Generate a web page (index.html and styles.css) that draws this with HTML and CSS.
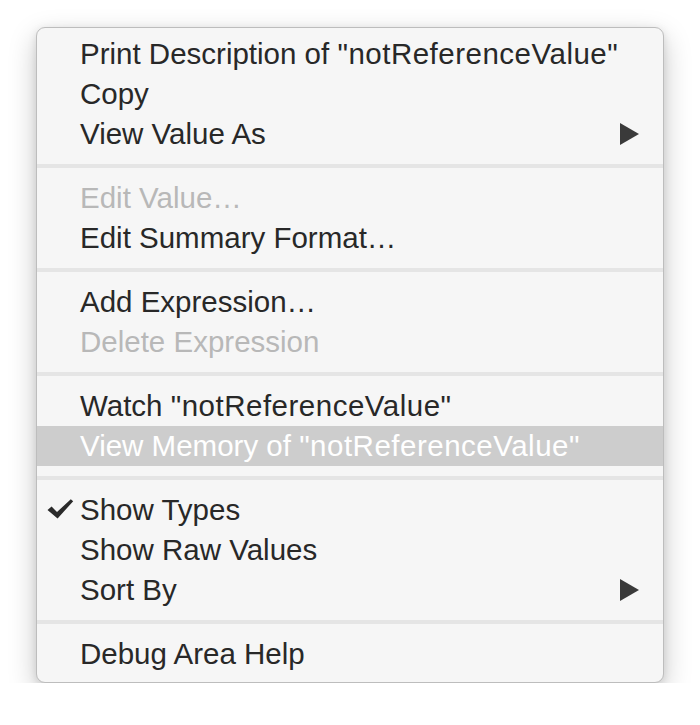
FILE: index.html
```html
<!DOCTYPE html>
<html>
<head>
<meta charset="utf-8">
<link rel="stylesheet" href="styles.css">
</head>
<body>
<div class="menu">
  <div class="item"><span class="mark"></span><span class="label">Print Description of <span class="q">"notReferenceValue"</span></span></div>
  <div class="item"><span class="mark"></span><span class="label">Copy</span></div>
  <div class="item"><span class="mark"></span><span class="label">View Value As</span><svg class="arrow" width="19" height="22" viewBox="0 0 19 22"><polygon points="0,0 19,11 0,22" fill="#3a3a3a"/></svg></div>
  <div class="sep"></div>
  <div class="item disabled"><span class="mark"></span><span class="label">Edit Value…</span></div>
  <div class="item"><span class="mark"></span><span class="label">Edit Summary Format…</span></div>
  <div class="sep"></div>
  <div class="item"><span class="mark"></span><span class="label">Add Expression…</span></div>
  <div class="item disabled"><span class="mark"></span><span class="label">Delete Expression</span></div>
  <div class="sep"></div>
  <div class="item"><span class="mark"></span><span class="label">Watch <span class="q">"notReferenceValue"</span></span></div>
  <div class="item active"><span class="mark"></span><span class="label">View Memory of <span class="q">"notReferenceValue"</span></span></div>
  <div class="sep"></div>
  <div class="item"><span class="mark check"><svg width="27" height="20" viewBox="0 0 27 20"><path d="M0.5 11 L4.6 7.6 L10 13 L23.8 0.2 L26.2 2.2 L10.6 19.4 Z" fill="#2a2a2a"/></svg></span><span class="label">Show Types</span></div>
  <div class="item"><span class="mark"></span><span class="label">Show Raw Values</span></div>
  <div class="item"><span class="mark"></span><span class="label">Sort By</span><svg class="arrow" width="19" height="22" viewBox="0 0 19 22"><polygon points="0,0 19,11 0,22" fill="#3a3a3a"/></svg></div>
  <div class="sep"></div>
  <div class="item"><span class="mark"></span><span class="label">Debug Area Help</span></div>
</div>
</body>
</html>
```
FILE: styles.css
```css
html, body {
  margin: 0;
  padding: 0;
  background: #ffffff;
}
.menu {
  box-sizing: border-box;
  margin: 27px 0 0 36px;
  width: 628px;
  padding: 6px 0 8px;
  background: #f6f6f6;
  border: 1px solid #bdbdbd;
  border-radius: 9px;
  box-shadow: 0 10px 28px rgba(0, 0, 0, 0.22), 0 2px 8px rgba(0, 0, 0, 0.1);
  font-family: "Liberation Sans", Arial, sans-serif;
  font-size: 29.5px;
  color: #282828;
}
.item {
  display: flex;
  align-items: center;
  height: 40px;
  padding-right: 24px;
}
.mark {
  width: 43px;
  flex: none;
  display: flex;
  align-items: center;
  padding-left: 10px;
  box-sizing: border-box;
}
.mark svg {
  display: block;
}
.check svg {
  margin-top: -2px;
}
.label {
  flex: 1;
  white-space: nowrap;
}
.q {
  letter-spacing: 0.5px;
}
.arrow {
  display: block;
  flex: none;
}
.disabled {
  color: #b8b8b8;
}
.active {
  background: #cdcdcd;
  color: #ffffff;
}
.sep {
  height: 24px;
  display: flex;
  align-items: center;
}
.sep::before {
  content: "";
  display: block;
  width: 100%;
  height: 4px;
  background: #e5e5e5;
}
```
